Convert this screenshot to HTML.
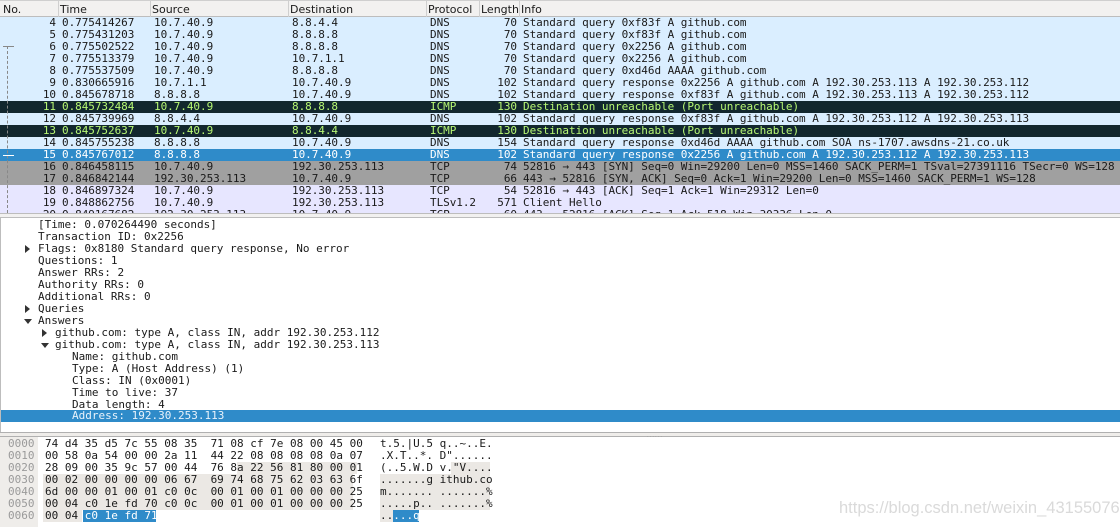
<!DOCTYPE html>
<html><head><meta charset="utf-8"><style>
*{margin:0;padding:0;box-sizing:border-box}
body{width:1120px;height:527px;overflow:hidden;background:#fff;position:relative;font-family:"DejaVu Sans Mono","Liberation Mono",monospace;font-size:11px;color:#1a1a1a}
.hdr{position:absolute;left:0;top:0;width:1120px;height:17px;background:#f2f1f0;border-bottom:1px solid #bdbdbd;border-top:1px solid #cfcfcf;font-family:"DejaVu Sans","Liberation Sans",sans-serif;font-size:11px}
.hdr span{position:absolute;top:2px}
.hdr i{position:absolute;top:0;width:1px;height:16px;background:#cfcfcf}
.row{position:absolute;left:0;width:1120px;height:12px;line-height:12px;white-space:pre;letter-spacing:-0.05px}
.row span{position:absolute;top:0}
.r{text-align:right}
.u{background:#daeeff}
.k{background:#12272e;color:#b7f774}
.s{background:#2f8bc9;color:#fff}
.g{background:#a0a0a0;color:#1a1a1a}
.t{background:#e7e6ff}
.d{position:absolute;height:12px;line-height:12px;white-space:pre}
.tri{position:absolute;width:0;height:0}
.hx{position:absolute;left:0;height:12px;line-height:12px;white-space:pre;font-size:11px;letter-spacing:0}
</style></head><body>
<div class="hdr">
<span style="left:3px">No.</span><i style="left:58px"></i>
<span style="left:60px">Time</span><i style="left:150px"></i>
<span style="left:152px">Source</span><i style="left:288px"></i>
<span style="left:290px">Destination</span><i style="left:426px"></i>
<span style="left:428px">Protocol</span><i style="left:479px"></i>
<span style="left:481px">Length</span><i style="left:519px"></i>
<span style="left:521px">Info</span>
</div>
<div id="list"></div>
<div style="position:absolute;left:0;top:213px;width:1120px;height:5px;background:#f2f1f0;border-top:1px solid #bdbdbd;border-bottom:1px solid #bdbdbd"></div>
<div style="position:absolute;left:0;top:218px;width:1px;height:214px;background:#bdbdbd"></div>
<div id="det"></div>
<div style="position:absolute;left:0;top:432px;width:1120px;height:5px;background:#efedea;border-top:1px solid #b0b0b0;border-bottom:1px solid #b0b0b0"></div>
<div style="position:absolute;left:647px;top:433px;font-size:6px;color:#999;letter-spacing:1px;font-family:sans-serif">......</div>
<div style="position:absolute;left:0;top:437px;width:38px;height:90px;background:#efedea"></div>
<div id="hex"></div>
<div style="position:absolute;left:839px;top:499px;font-family:'Liberation Sans',sans-serif;font-size:16.5px;color:#dadada">https://blog.csdn.net/weixin_43155076</div>
<script>
var rows=[
["4","0.775414267","10.7.40.9","8.8.4.4","DNS","70","Standard query 0xf83f A github.com","u"],
["5","0.775431203","10.7.40.9","8.8.8.8","DNS","70","Standard query 0xf83f A github.com","u"],
["6","0.775502522","10.7.40.9","8.8.8.8","DNS","70","Standard query 0x2256 A github.com","u"],
["7","0.775513379","10.7.40.9","10.7.1.1","DNS","70","Standard query 0x2256 A github.com","u"],
["8","0.775537509","10.7.40.9","8.8.8.8","DNS","70","Standard query 0xd46d AAAA github.com","u"],
["9","0.830665916","10.7.1.1","10.7.40.9","DNS","102","Standard query response 0x2256 A github.com A 192.30.253.113 A 192.30.253.112","u"],
["10","0.845678718","8.8.8.8","10.7.40.9","DNS","102","Standard query response 0xf83f A github.com A 192.30.253.113 A 192.30.253.112","u"],
["11","0.845732484","10.7.40.9","8.8.8.8","ICMP","130","Destination unreachable (Port unreachable)","k"],
["12","0.845739969","8.8.4.4","10.7.40.9","DNS","102","Standard query response 0xf83f A github.com A 192.30.253.112 A 192.30.253.113","u"],
["13","0.845752637","10.7.40.9","8.8.4.4","ICMP","130","Destination unreachable (Port unreachable)","k"],
["14","0.845755238","8.8.8.8","10.7.40.9","DNS","154","Standard query response 0xd46d AAAA github.com SOA ns-1707.awsdns-21.co.uk","u"],
["15","0.845767012","8.8.8.8","10.7.40.9","DNS","102","Standard query response 0x2256 A github.com A 192.30.253.112 A 192.30.253.113","s"],
["16","0.846458115","10.7.40.9","192.30.253.113","TCP","74","52816 \u2192 443 [SYN] Seq=0 Win=29200 Len=0 MSS=1460 SACK_PERM=1 TSval=27391116 TSecr=0 WS=128","g"],
["17","0.846842144","192.30.253.113","10.7.40.9","TCP","66","443 \u2192 52816 [SYN, ACK] Seq=0 Ack=1 Win=29200 Len=0 MSS=1460 SACK_PERM=1 WS=128","g"],
["18","0.846897324","10.7.40.9","192.30.253.113","TCP","54","52816 \u2192 443 [ACK] Seq=1 Ack=1 Win=29312 Len=0","t"],
["19","0.848862756","10.7.40.9","192.30.253.113","TLSv1.2","571","Client Hello","t"],
["20","0.849167682","192.30.253.113","10.7.40.9","TCP","60","443 \u2192 52816 [ACK] Seq=1 Ack=518 Win=30336 Len=0","t"]];
var h="";
rows.forEach(function(r,i){var y=17+i*12;var hh=i==16?(213-y):12;
h+='<div class="row '+r[7]+'" style="top:'+y+'px;height:'+hh+'px;overflow:hidden"><span class="r" style="left:0;width:56px">'+r[0]+'</span><span style="left:62px">'+r[1]+'</span><span style="left:154px">'+r[2]+'</span><span style="left:292px">'+r[3]+'</span><span style="left:430px">'+r[4]+'</span><span class="r" style="left:480px;width:37px">'+r[5]+'</span><span style="left:523px">'+r[6]+'</span></div>';});
h+='<div style="position:absolute;left:7px;top:46px;width:0;height:167px;border-left:1px dashed #888"></div>';
h+='<div style="position:absolute;left:3px;top:46px;width:11px;height:1px;background:#888"></div>';
h+='<div style="position:absolute;left:3px;top:155px;width:11px;height:1px;background:#fff"></div>';
document.getElementById('list').innerHTML=h;
var det=[[38,"[Time: 0.070264490 seconds]"],[38,"Transaction ID: 0x2256"],[38,"Flags: 0x8180 Standard query response, No error","r"],[38,"Questions: 1"],[38,"Answer RRs: 2"],[38,"Authority RRs: 0"],[38,"Additional RRs: 0"],[38,"Queries","r"],[38,"Answers","d"],[55,"github.com: type A, class IN, addr 192.30.253.112","r"],[55,"github.com: type A, class IN, addr 192.30.253.113","d"],[72,"Name: github.com"],[72,"Type: A (Host Address) (1)"],[72,"Class: IN (0x0001)"],[72,"Time to live: 37"],[72,"Data length: 4"],[72,"Address: 192.30.253.113","sel"]];
h="";
det.forEach(function(d,i){var y=219+i*12;
if(d[2]=="sel")h+='<div style="position:absolute;left:1px;top:'+(y-1)+'px;width:1119px;height:12px;background:#2f8bc9"></div>';
h+='<div class="d" style="left:'+d[0]+'px;top:'+y+'px;'+(d[2]=="sel"?'color:#e8f2fb;top:'+(y-1)+'px':'')+'">'+d[1]+'</div>';
var tx=d[0]-14;
if(d[2]=="r")h+='<div class="tri" style="left:'+(tx+1)+'px;top:'+(y+2)+'px;border-left:5px solid #333;border-top:4px solid transparent;border-bottom:4px solid transparent"></div>';
if(d[2]=="d")h+='<div class="tri" style="left:'+tx+'px;top:'+(y+4)+'px;border-top:5px solid #333;border-left:4px solid transparent;border-right:4px solid transparent"></div>';
});
document.getElementById('det').innerHTML=h;
var hx=[["0000","74 d4 35 d5 7c 55 08 35  71 08 cf 7e 08 00 45 00","t.5.|U.5 q..~..E."],
["0010","00 58 0a 54 00 00 2a 11  44 22 08 08 08 08 0a 07",".X.T..*. D\"......"],
["0020","28 09 00 35 9c 57 00 44  76 8a 22 56 81 80 00 01","(..5.W.D v.\"V...."],
["0030","00 02 00 00 00 00 06 67  69 74 68 75 62 03 63 6f",".......g ithub.co"],
["0040","6d 00 00 01 00 01 c0 0c  00 01 00 01 00 00 00 25","m....... .......%"],
["0050","00 04 c0 1e fd 70 c0 0c  00 01 00 01 00 00 00 25",".....p.. .......%"],
["0060","00 04 c0 1e fd 71","......"]];
var cw=6.45;h="";
function box(x,y,w,c){h+='<div style="position:absolute;left:'+x+'px;top:'+y+'px;width:'+w+'px;height:12px;background:'+c+'"></div>';}
var Y0=438;
box(45+30*cw-2,Y0+24,18*cw+4,"#ebe8e4");box(380+11*cw,Y0+24,6*cw,"#ebe8e4");
for(var k=1;k<4;k++){box(43,Y0+24+k*12,48*cw,"#ebe8e4");box(380,Y0+24+k*12,17*cw,"#ebe8e4");}
box(43,Y0+72,6*cw,"#ebe8e4");box(380,Y0+72,2*cw,"#ebe8e4");
box(45+6*cw-1,Y0+72,11*cw+2,"#2f8bc9");box(380+2*cw,Y0+72,4*cw,"#2f8bc9");
hx.forEach(function(r,i){var y=Y0+i*12;
h+='<div class="hx" style="left:8px;top:'+y+'px;color:#9a9a9a">'+r[0]+'</div>';
var hs=r[1],as=r[2].replace(/&/g,'&amp;').replace(/</g,'&lt;');
if(i==6){hs='00 04 <span style="color:#fff">c0 1e fd 71</span>';as='..<span style="color:#fff">...q</span>';}
h+='<div class="hx" style="left:45px;top:'+y+'px">'+hs+'</div>';
h+='<div class="hx" style="left:380px;top:'+y+'px">'+as+'</div>';});
document.getElementById('hex').innerHTML=h;
</script>
</body></html>
